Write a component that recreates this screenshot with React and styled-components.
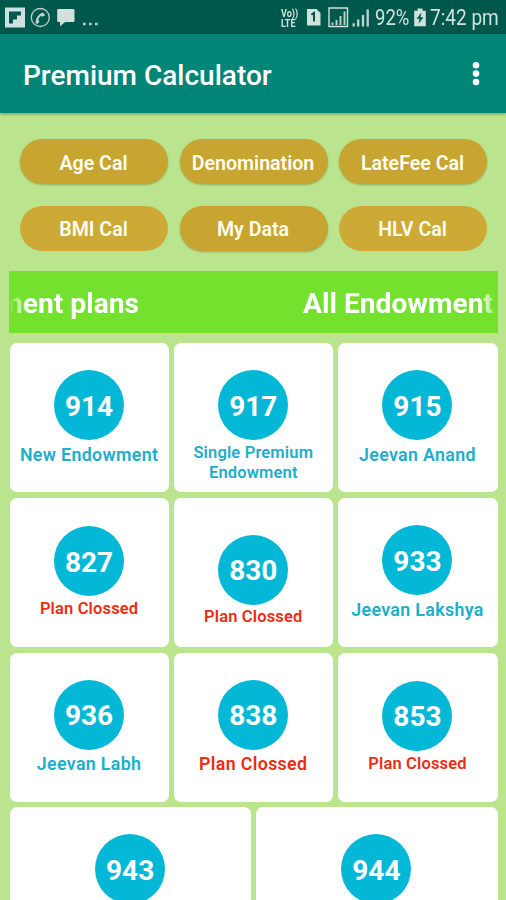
import React from "react";
import styled, { createGlobalStyle } from "styled-components";

const GlobalStyle = createGlobalStyle`
  * {
    box-sizing: border-box;
  }

  body {
    margin: 0;
    background-color: #bbe48f;
    font-family: Roboto, "Liberation Sans", sans-serif;
    overflow: hidden;
  }
`;

const tools = [
  { id: 1, title: "Age Cal", raised: true },
  { id: 2, title: "Denomination", raised: true },
  { id: 3, title: "LateFee Cal", raised: true },
  { id: 4, title: "BMI Cal" },
  { id: 5, title: "My Data", raised: true },
  { id: 6, title: "HLV Cal" },
];

const planRows = [
  [
    { no: "914", name: "New Endowment", large: true },
    { no: "917", name: "Single Premium Endowment" },
    { no: "915", name: "Jeevan Anand", large: true },
  ],
  [
    { no: "827", name: "Plan Clossed", closed: true, top: 28 },
    { no: "830", name: "Plan Clossed", closed: true, top: 36.5 },
    { no: "933", name: "Jeevan Lakshya", large: true },
  ],
  [
    { no: "936", name: "Jeevan Labh", large: true },
    { no: "838", name: "Plan Clossed", large: true, closed: true },
    { no: "853", name: "Plan Clossed", closed: true, top: 28 },
  ],
  [{ no: "943" }, { no: "944" }],
];

const NotificationIcons = () => (
  <svg width="100" height="34" viewBox="0 0 100 34">
    <path d="M5 7.5h20v20H5z" fill="#cfe2de" />
    <path d="M9 11.5h12v4h-4v4h-4v4H9z" fill="#00574b" />
    <circle cx="40.3" cy="17.5" r="9" fill="none" stroke="#bcd5d0" strokeWidth="1.3" />
    <path
      d="M35.5 23.2c.2-5 2.6-8.8 7.4-10.7l2.3 2.4-2.6 1.8-1.6-.9c-1.5 1.2-2.3 2.7-2.7 4.3l1.2 1.2-1.8 2.6z"
      fill="#bcd5d0"
    />
    <path
      d="M58.5 9h14.7q1.3 0 1.3 1.3v10.4q0 1.3-1.3 1.3h-8L60 26.3V22h-1.5q-1.3 0-1.3-1.3V10.3q0-1.3 1.3-1.3z"
      fill="#cfe2de"
    />
    <path
      d="M83 22.7h2.6v2.6H83zM89 22.7h2.6v2.6H89zM95 22.7h2.6v2.6H95z"
      fill="#bcd5d0"
    />
  </svg>
);

const SignalIcons = () => (
  <svg width="64" height="34" viewBox="306 0 64 34">
    <path d="M307 9h9.5l4 4v12.5H307z" fill="#cfe2de" />
    <path d="M311.3 14.8l2.7-1.9v8.6" fill="none" stroke="#00574b" strokeWidth="2" />
    <path d="M329 8h18.5v18.5H329z" fill="none" stroke="#cfe2de" strokeWidth="1.4" />
    <path
      d="M332.5 22.5V25M336.5 20V25M340.5 16v9M344.5 11.5V25"
      stroke="#bcd5d0"
      strokeWidth="1.9"
    />
    <path
      d="M353.7 23.3v3.2M358.2 19.5v7M363 15v11.5M367.7 9.5v17"
      stroke="#bcd5d0"
      strokeWidth="2.3"
    />
  </svg>
);

const BatteryIcon = () => (
  <svg width="12" height="34" viewBox="414 0 12 34">
    <path d="M417.5 8.5h5v2.3h3.3v15.5h-11.6V10.8h3.3z" fill="#cfe2de" />
    <path d="M421.5 12.5l-5 6.3h3l-1 5 5-6.5h-3z" fill="#00574b" />
  </svg>
);

const MenuIcon = () => (
  <svg width="8" height="26" viewBox="0 0 8 26">
    <circle cx="4" cy="4.2" r="3.3" fill="#fff" />
    <circle cx="4" cy="12.6" r="3.3" fill="#fff" />
    <circle cx="4" cy="21" r="3.3" fill="#fff" />
  </svg>
);

const PlanCard = ({ plan }) => {
  return (
    <Card $top={plan.top}>
      <PlanNumber>{plan.no}</PlanNumber>
      {plan.name && (
        <PlanName $large={plan.large} $closed={plan.closed}>
          {plan.name}
        </PlanName>
      )}
    </Card>
  );
};

const App = () => {
  return (
    <Screen>
      <GlobalStyle />
      <StatusBar>
        <NotificationIcons />
        <StatusRight>
          <Volte>
            <span>Vo))</span>
            <span>LTE</span>
          </Volte>
          <SignalIcons />
          <Battery>92%</Battery>
          <BatteryIcon />
          <Clock>7:42 pm</Clock>
        </StatusRight>
      </StatusBar>
      <AppBar>
        <h1>Premium Calculator</h1>
        <MenuButton aria-label="More options">
          <MenuIcon />
        </MenuButton>
      </AppBar>

      <ToolGrid>
        {tools.map((tool) => (
          <ToolButton key={tool.id} $raised={tool.raised}>
            {tool.title}
          </ToolButton>
        ))}
      </ToolGrid>

      <Marquee>
        <MarqueeEnd>ment plans</MarqueeEnd>
        <MarqueeStart>All Endowment</MarqueeStart>
      </Marquee>

      <PlanList>
        {planRows.map((row, index) => (
          <PlanRow key={index}>
            {row.map((plan) => (
              <PlanCard key={plan.no} plan={plan} />
            ))}
          </PlanRow>
        ))}
      </PlanList>
    </Screen>
  );
};

const Screen = styled.div`
  display: flex;
  flex-direction: column;
  width: 506px;
  height: 900px;
  overflow: hidden;
  background-color: #bbe48f;
`;

const StatusBar = styled.header`
  display: flex;
  justify-content: space-between;
  flex: none;
  height: 34px;
  padding-right: 7px;
  background-color: #00574b;
  color: #cfe2de;
`;

const StatusRight = styled.div`
  display: flex;
  align-items: center;
`;

const Volte = styled.div`
  display: flex;
  flex-direction: column;
  width: 25px;
  padding-top: 1px;
  font-size: 9px;
  font-weight: 700;
  line-height: 8px;
  transform: scaleY(1.2);
`;

const Battery = styled.span`
  width: 39px;
  margin-left: 5px;
  padding-top: 1px;
  font-size: 21.5px;
  transform: scaleX(0.86);
  transform-origin: left;
`;

const Clock = styled.span`
  width: 69px;
  margin-left: 4px;
  padding-top: 1px;
  font-size: 21.5px;
  white-space: nowrap;
  transform: scaleX(0.885);
  transform-origin: left;
`;

const AppBar = styled.div`
  display: flex;
  align-items: center;
  justify-content: space-between;
  flex: none;
  height: 79px;
  padding: 0 26px 0 23px;
  background-color: #008577;
  box-shadow: 0 1px 3px rgba(0, 0, 0, 0.35);

  h1 {
    margin: 4px 0 0;
    color: #fff;
    font-size: 28px;
    font-weight: 500;
    line-height: 32px;
  }
`;

const MenuButton = styled.button`
  display: flex;
  margin-top: 1px;
  padding: 0;
  border: none;
  background: none;
`;

const ToolGrid = styled.div`
  display: grid;
  grid-template-columns: repeat(3, 1fr);
  grid-auto-rows: 45px;
  gap: 21.5px 11.5px;
  padding: 26px 19px 20px 20px;
`;

const ToolButton = styled.button`
  padding: 4px 1px 1px 0;
  border: none;
  border-radius: 23px;
  background-color: ${(props) => (props.$raised ? "#c8a430" : "#cdaa36")};
  box-shadow: ${(props) =>
    props.$raised ? "0 1px 2px rgba(90, 90, 20, 0.4)" : "none"};
  color: #fffdf0;
  font-family: inherit;
  font-size: 19.6px;
  font-weight: 600;
  white-space: nowrap;
`;

const Marquee = styled.div`
  display: flex;
  align-items: center;
  justify-content: space-between;
  flex: none;
  height: 62.5px;
  margin: 0 8px 0 9px;
  padding: 3px 5px 0 0;
  background-color: #74e12e;
  color: #fff;
  font-size: 28.2px;
  font-weight: 700;
  white-space: nowrap;
  overflow: hidden;
`;

const MarqueeEnd = styled.span`
  display: flex;
  justify-content: flex-end;
  width: 130px;
  overflow: hidden;
  mask-image: linear-gradient(to right, transparent, #000 18px);
`;

const MarqueeStart = styled.span`
  mask-image: linear-gradient(to left, rgba(0, 0, 0, 0.4), #000 14px);
`;

const PlanList = styled.div`
  display: flex;
  flex-direction: column;
  gap: 5.7px;
  padding: 10.4px 8.5px 0 10px;
`;

const PlanRow = styled.div`
  display: flex;
  flex: none;
  gap: 5px;
  height: 149px;
`;

const Card = styled.div`
  display: flex;
  flex-direction: column;
  align-items: center;
  flex: 1 1 0;
  min-width: 0;
  padding-top: ${(props) => props.$top || 27}px;
  padding-right: 1px;
  border-radius: 7px;
  background-color: #fff;
`;

const PlanNumber = styled.div`
  display: flex;
  align-items: center;
  justify-content: center;
  flex: none;
  width: 70px;
  height: 70px;
  padding-top: 2px;
  border-radius: 50%;
  background-color: #02b8d6;
  color: #fff;
  font-size: 28px;
  font-weight: 700;
`;

const PlanName = styled.div`
  max-width: 150px;
  padding-top: ${(props) => (props.$large ? 4.5 : 2.8)}px;
  color: ${(props) => (props.$closed ? "#ee2c12" : "#1caecb")};
  font-size: ${(props) => (props.$large ? 17.8 : 16.5)}px;
  font-weight: 600;
  letter-spacing: ${(props) => (props.$large ? 0.35 : 0.15)}px;
  line-height: 19.5px;
  text-align: center;
`;

export default App;
